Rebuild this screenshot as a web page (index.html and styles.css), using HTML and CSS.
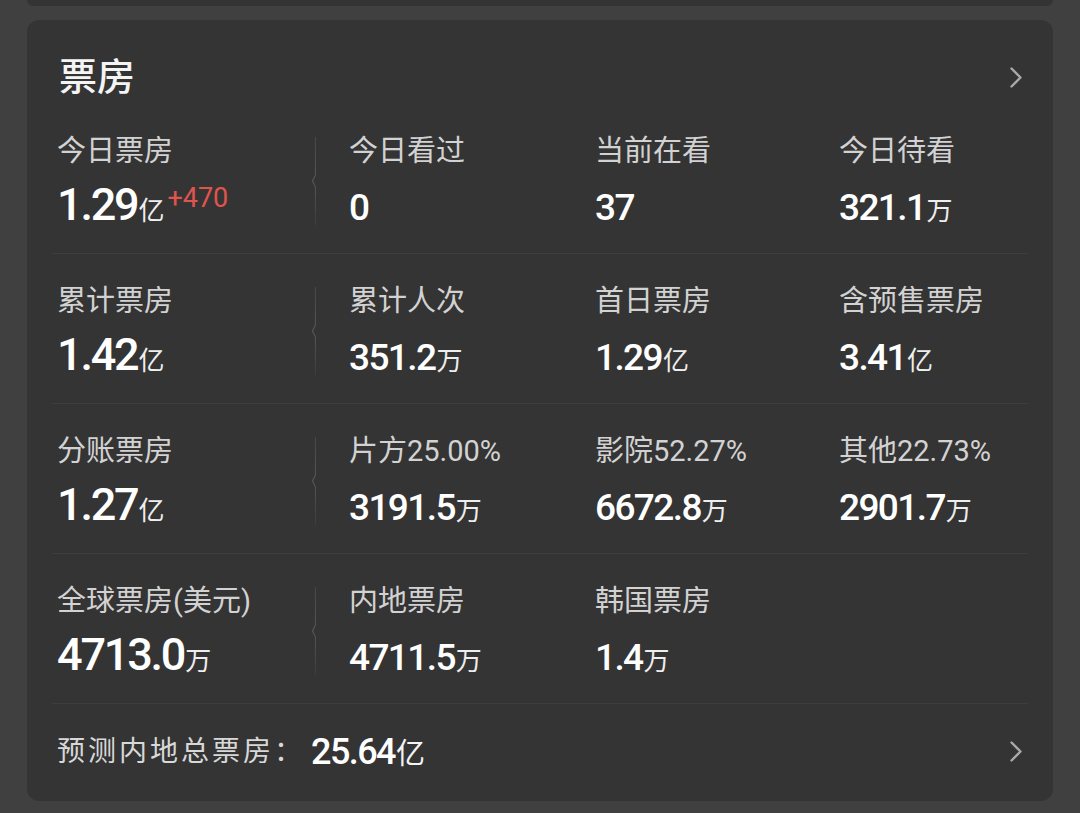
FILE: index.html
```html
<!DOCTYPE html>
<html lang="zh-CN">
<head>
<meta charset="utf-8">
<title>票房</title>
<link rel="stylesheet" href="styles.css">
</head>
<body>
<div class="stub"></div>
<section class="card">
  <header class="card-head">
    <h2 class="title">票房</h2>
    <svg class="chev" width="12" height="21" viewBox="0 0 12 21"><polyline points="1.5,1.5 10.5,10.5 1.5,19.5" fill="none" stroke="#a9a9a9" stroke-width="2.4" stroke-linecap="round" stroke-linejoin="round"/></svg>
  </header>
  <div class="stats">
    <div class="row">
      <div class="cell c1"><div class="lbl">今日票房</div><div class="val">1.29<span class="unit">亿</span><span class="delta">+470</span></div></div>
      <div class="cell c2"><div class="lbl">今日看过</div><div class="val">0</div></div>
      <div class="cell c3"><div class="lbl">当前在看</div><div class="val">37</div></div>
      <div class="cell c4"><div class="lbl">今日待看</div><div class="val">321.1<span class="unit">万</span></div></div>
    </div>
    <div class="row">
      <div class="cell c1"><div class="lbl">累计票房</div><div class="val">1.42<span class="unit">亿</span></div></div>
      <div class="cell c2"><div class="lbl">累计人次</div><div class="val">351.2<span class="unit">万</span></div></div>
      <div class="cell c3"><div class="lbl">首日票房</div><div class="val">1.29<span class="unit">亿</span></div></div>
      <div class="cell c4"><div class="lbl">含预售票房</div><div class="val">3.41<span class="unit">亿</span></div></div>
    </div>
    <div class="row">
      <div class="cell c1"><div class="lbl">分账票房</div><div class="val">1.27<span class="unit">亿</span></div></div>
      <div class="cell c2"><div class="lbl">片方25.00%</div><div class="val">3191.5<span class="unit">万</span></div></div>
      <div class="cell c3"><div class="lbl">影院52.27%</div><div class="val">6672.8<span class="unit">万</span></div></div>
      <div class="cell c4"><div class="lbl">其他22.73%</div><div class="val">2901.7<span class="unit">万</span></div></div>
    </div>
    <div class="row">
      <div class="cell c1"><div class="lbl">全球票房(美元)</div><div class="val">4713.0<span class="unit">万</span></div></div>
      <div class="cell c2"><div class="lbl">内地票房</div><div class="val">4711.5<span class="unit">万</span></div></div>
      <div class="cell c3"><div class="lbl">韩国票房</div><div class="val">1.4<span class="unit">万</span></div></div>
      <div class="cell c4"></div>
    </div>
  </div>
  <div class="forecast">
    <span class="fc-label">预测内地总票房：</span>
    <span class="fc-val">25.64<span class="unit">亿</span></span>
    <svg class="chev fc-chev" width="12" height="21" viewBox="0 0 12 21"><polyline points="1.5,1.5 10.5,10.5 1.5,19.5" fill="none" stroke="#a9a9a9" stroke-width="2.4" stroke-linecap="round" stroke-linejoin="round"/></svg>
  </div>
</section>
</body>
</html>
```

FILE: styles.css
```css
html, body {
  margin: 0;
  padding: 0;
  background: #404040;
}
body {
  width: 1080px;
  height: 813px;
  overflow: hidden;
  font-family: Roboto, "Noto Sans CJK SC", sans-serif;
  color: #ffffff;
}
.stub {
  height: 6px;
  margin: 0 27px;
  background: #343434;
  border-radius: 0 0 12px 12px;
}
.card {
  margin: 14px 27px 0;
  height: 781px;
  box-sizing: border-box;
  padding: 0 25px;
  background: #343434;
  border-radius: 12px;
}
.card-head {
  display: flex;
  align-items: center;
  justify-content: space-between;
  height: 84px;
  box-sizing: border-box;
  padding: 32px 6px 2px 7px;
}
.title {
  margin: 0;
  font-size: 38px;
  line-height: 50px;
  font-weight: 500;
  color: #f4f4f4;
}
.chev {
  display: block;
  flex: none;
}
.row {
  display: grid;
  grid-template-columns: 264px 279px 244px 1fr;
  height: 150px;
  box-sizing: border-box;
  border-bottom: 1px solid #3e3e3e;
}
.cell {
  padding-top: 29px;
  min-width: 0;
}
.c1 {
  padding-left: 5px;
  background-image: url("data:image/svg+xml;utf8,<svg xmlns='http://www.w3.org/2000/svg' width='6' height='88'><defs><linearGradient id='g' x1='0' y1='0' x2='0' y2='1'><stop offset='0' stop-color='%23464646'/><stop offset='0.5' stop-color='%23555555'/><stop offset='1' stop-color='%233c3c3c'/></linearGradient></defs><polyline points='5.5,0 5.5,38 2.5,44 5.5,50 5.5,88' fill='none' stroke='url(%23g)' stroke-width='1.2'/></svg>");
  background-repeat: no-repeat;
  background-position: right 0 top 33px;
  background-size: 6px 88px;
}
.c2 {
  padding-left: 33px;
}
.lbl {
  font-size: 29px;
  line-height: 36px;
  height: 36px;
  color: #d2d2d2;
  white-space: nowrap;
}
.val {
  margin-top: 15px;
  height: 45px;
  font-size: 37px;
  line-height: 48px;
  font-weight: 500;
  letter-spacing: -1.6px;
  color: #ffffff;
  white-space: nowrap;
}
.c1 .val {
  margin-top: 12px;
  height: 48px;
  font-size: 45px;
  letter-spacing: -2.2px;
}
.unit {
  font-size: 26px;
  line-height: 1;
  letter-spacing: 0;
  font-weight: 400;
  color: #eeeeee;
  margin-left: 1px;
}
.delta {
  font-size: 27px;
  line-height: 1;
  letter-spacing: 0;
  font-weight: 400;
  color: #e0544e;
  vertical-align: 13px;
  margin-left: 3px;
}
.forecast {
  display: flex;
  align-items: center;
  height: 97px;
  box-sizing: border-box;
  padding: 0 6px 2px 5px;
}
.fc-label {
  font-size: 28px;
  line-height: 36px;
  letter-spacing: 3px;
  color: #d8d8d8;
}
.fc-val {
  margin-left: 6px;
  font-size: 36px;
  line-height: 40px;
  font-weight: 500;
  letter-spacing: -1.6px;
  color: #ffffff;
}
.fc-val .unit {
  font-size: 29px;
  color: #f4f4f4;
}
.fc-chev {
  margin-left: auto;
}
```
